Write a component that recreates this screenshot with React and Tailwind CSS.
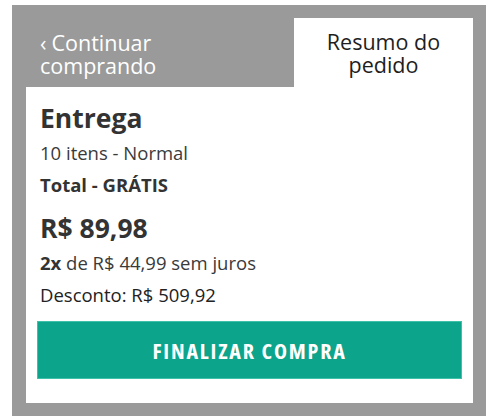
export default function App() {
  return (
    <div
      className="w-[500px] h-[420px] bg-white pl-[12px] pt-[5px]"
      style={{ fontFamily: '"Open Sans", "Noto Sans", sans-serif' }}
    >
      <div className="w-[474px] h-[411px] bg-[#9a9a9a] pl-[14px] pr-[13px] pt-[13px] pb-[13px] flex flex-col">
        {/* Tabs */}
        <div className="flex h-[69px] shrink-0">
          <div className="flex-1 pl-[14px] pt-[13px] text-white text-[21.5px] leading-[23px]">
            <div className="flex items-baseline">
              <span className="mr-[5px]">‹</span>
              <span>Continuar</span>
            </div>
            <div>comprando</div>
          </div>
          <div className="w-[179px] bg-white text-[#1e1e1e] text-[21.5px] leading-[23px] text-center pt-[12px]">
            Resumo do
            <br />
            pedido
          </div>
        </div>

        {/* Content */}
        <div className="flex-1 bg-white px-[11px] pt-[15px]">
          <div className="px-[3px] text-[#333]">
            <h2 className="text-[26.5px] leading-[32px] font-bold mb-[3px]">Entrega</h2>
            <p className="text-[18.5px] leading-[32px] text-[#3a3a3a]">10 itens - Normal</p>
            <p className="text-[18.5px] leading-[32px] font-bold">Total - GRÁTIS</p>
            <p className="text-[26.5px] leading-[32px] font-bold mt-[11px]">R$ 89,98</p>
            <p className="text-[18.5px] leading-[32px] mt-[3px] text-[#3a3a3a]">
              <span className="font-bold text-[#333]">2x</span> de R$ 44,99 sem juros
            </p>
            <p className="text-[18.5px] leading-[32px] text-[#222]">Desconto: R$ 509,92</p>
          </div>
          <button className="mt-[10px] w-full h-[58px] bg-[#0ca48a] border border-[#3fc0a8] flex items-center justify-center text-white text-[22px] font-bold tracking-[1.8px] font-stretch-condensed">
            FINALIZAR COMPRA
          </button>
        </div>
      </div>
    </div>
  );
}
